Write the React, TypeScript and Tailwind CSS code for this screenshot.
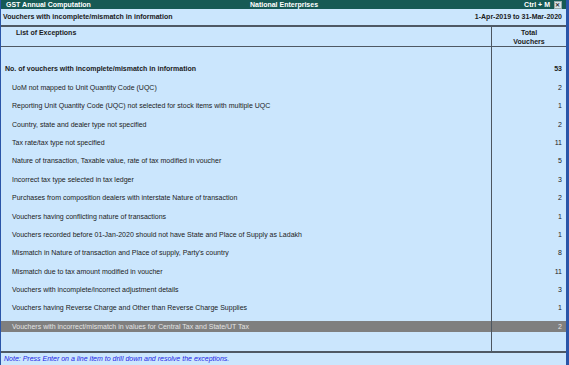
const rows: { label: string; count: number }[] = [
  { label: "UoM not mapped to Unit Quantity Code (UQC)", count: 2 },
  { label: "Reporting Unit Quantity Code (UQC) not selected for stock items with multiple UQC", count: 1 },
  { label: "Country, state and dealer type not specified", count: 2 },
  { label: "Tax rate/tax type not specified", count: 11 },
  { label: "Nature of transaction, Taxable value, rate of tax modified in voucher", count: 5 },
  { label: "Incorrect tax type selected in tax ledger", count: 3 },
  { label: "Purchases from composition dealers with interstate Nature of transaction", count: 2 },
  { label: "Vouchers having conflicting nature of transactions", count: 1 },
  { label: "Vouchers recorded before 01-Jan-2020 should not have State and Place of Supply as Ladakh", count: 1 },
  { label: "Mismatch in Nature of transaction and Place of supply, Party's country", count: 8 },
  { label: "Mismatch due to tax amount modified in voucher", count: 11 },
  { label: "Vouchers with incomplete/incorrect adjustment details", count: 3 },
  { label: "Vouchers having Reverse Charge and Other than Reverse Charge Supplies", count: 1 },
  { label: "Vouchers with incorrect/mismatch in values for Central Tax and State/UT Tax", count: 2 },
];

function Row({ label, count, bold, indent, active }: { label: string; count: number; bold?: boolean; indent?: boolean; active?: boolean }) {
  const cell = `h-[11px] leading-[11px] ${active ? "bg-[#7f7f7f] text-[#e4e4e4]" : "text-[#1b1b1b]"} ${bold ? "font-bold" : ""}`;
  return (
    <div className="flex h-[18.4px]">
      <div className="flex flex-1 items-end">
        <div className={`w-full ${cell} ${indent ? "pl-[11px]" : "pl-[4px]"}`}>{label}</div>
      </div>
      <div className="flex w-[75px] items-end border-l border-[#4d5660]">
        <div className={`w-full pr-[4px] text-right ${cell}`}>{count}</div>
      </div>
    </div>
  );
}

export default function App() {
  return (
    <div
      className="flex h-[365px] w-[569px] flex-col overflow-hidden border-l border-r-[3px] border-[#2a55a8] bg-[#cbe6fd] text-[7px]"
      style={{ fontFamily: '"Liberation Sans", Arial, sans-serif' }}
    >
      {/* Title bar */}
      <div className="flex h-[9px] items-center bg-[#175a55] pl-[5px] pr-[4px] font-bold leading-[9px] text-white">
        <div className="flex-1">GST Annual Computation</div>
        <div className="flex-1 text-center">National Enterprises</div>
        <div className="flex flex-1 items-center justify-end gap-[4px]">
          <span>Ctrl + M</span>
          <span className="flex h-[8px] w-[8px] items-center justify-center border border-[#9aa] bg-[#d9e4ea] text-[6px] leading-none text-[#333]">
            ✕
          </span>
        </div>
      </div>

      {/* Report header */}
      <div className="flex h-[18px] items-center border-b-[2px] border-[#4f5964] px-[2px] font-bold text-[#1b1b1b]">
        <div className="flex-1">Vouchers with incomplete/mismatch in information</div>
        <div className="pr-[2px]">1-Apr-2019 to 31-Mar-2020</div>
      </div>

      {/* Column headers */}
      <div className="flex h-[20px] border-b border-[#4f5964] font-bold leading-[9px] text-[#1b1b1b]">
        <div className="flex-1 pl-[15px] pt-[1px]">List of Exceptions</div>
        <div className="w-[75px] border-l border-[#4d5660] pt-[1px] text-center">
          Total
          <br />
          Vouchers
        </div>
      </div>

      {/* Body */}
      <div className="flex flex-1 flex-col border-b-[2px] border-[#4f5964]">
        <div className="flex h-[9px]">
          <div className="flex-1" />
          <div className="w-[75px] border-l border-[#4d5660]" />
        </div>
        <Row label="No. of vouchers with incomplete/mismatch in information" count={53} bold />
        {rows.map((r, i) => (
          <Row key={r.label} label={r.label} count={r.count} indent active={i === rows.length - 1} />
        ))}
        <div className="flex flex-1">
          <div className="flex-1" />
          <div className="w-[75px] border-l border-[#4d5660]" />
        </div>
      </div>

      {/* Footer note */}
      <div className="flex h-[12px] items-center px-[3px] italic text-[#2323e6]">
        Note: Press Enter on a line item to drill down and resolve the exceptions.
      </div>
    </div>
  );
}
